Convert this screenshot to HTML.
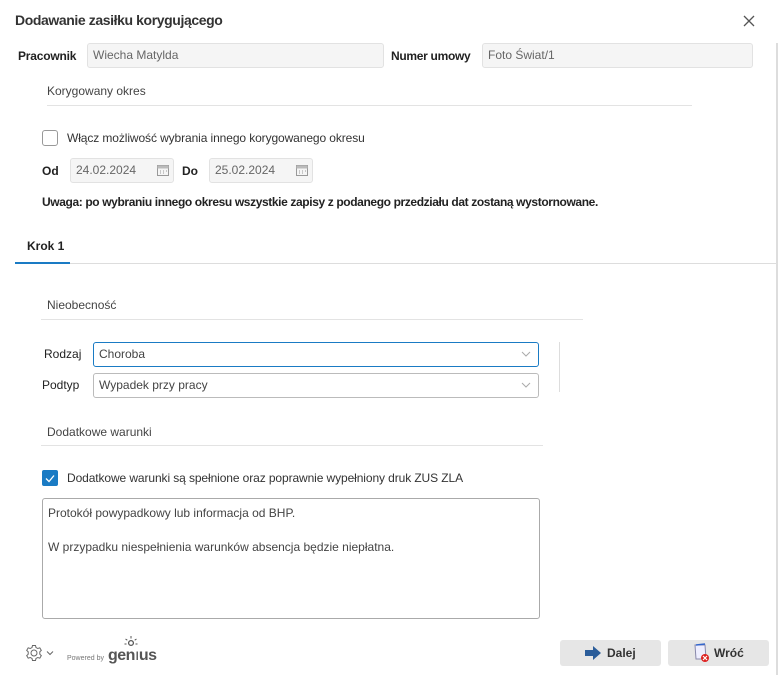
<!DOCTYPE html>
<html><head><meta charset="utf-8"><style>
*{box-sizing:border-box;margin:0;padding:0}
body{width:778px;height:675px;background:#fff;font-family:"Liberation Sans",sans-serif;font-size:12px;color:#333;position:relative;overflow:hidden}
.a{position:absolute;white-space:nowrap}
.lbl{font-weight:bold;color:#222}
.inp{position:absolute;background:#f5f5f5;border:1px solid #e2e2e2;border-radius:3px;color:#666;padding-left:5px;line-height:23px}
.sec{position:absolute;color:#444}
.ln{position:absolute;height:1px;background:#e3e3e3}
.sel{position:absolute;background:#fff;border:1px solid #bbb;border-radius:3px;padding-left:5px;line-height:23px;color:#444}
.btn{position:absolute;background:#e6e6e6;border-radius:3px;height:26px;top:640px;width:101px;font-weight:bold;color:#333;line-height:26px}
</style></head><body>
<div class="a" style="left:15px;top:12px;font-size:14px;font-weight:bold;color:#333;letter-spacing:-0.4px">Dodawanie zasiłku korygującego</div>
<svg class="a" style="left:743px;top:15px" width="12" height="12"><path d="M1 1L11 11M11 1L1 11" stroke="#555" stroke-width="1.3"/></svg>
<div class="a" style="left:776px;top:43px;width:2px;height:632px;background:#ddd"></div>

<div class="a lbl" style="left:18px;top:49px;letter-spacing:-0.2px">Pracownik</div>
<div class="inp" style="left:87px;top:43px;width:297px;height:25px">Wiecha Matylda</div>
<div class="a lbl" style="left:391px;top:49px;letter-spacing:-0.3px">Numer umowy</div>
<div class="inp" style="left:482px;top:43px;width:271px;height:25px">Foto Świat/1</div>

<div class="sec" style="left:47px;top:84px">Korygowany okres</div>
<div class="ln" style="left:47px;top:105px;width:645px"></div>

<div class="a" style="left:42px;top:130px;width:16px;height:16px;border:1px solid #999;border-radius:3px"></div>
<div class="a" style="left:67px;top:131px;letter-spacing:-0.1px">Włącz możliwość wybrania innego korygowanego okresu</div>

<div class="a lbl" style="left:42px;top:164px">Od</div>
<div class="inp" style="left:70px;top:158px;width:104px;height:25px">24.02.2024</div>
<svg class="a" style="left:157px;top:164px" width="12" height="12"><rect x="0.5" y="1.5" width="11" height="10" fill="none" stroke="#999"/><rect x="0.5" y="1.5" width="11" height="3" fill="#bbb"/><path d="M3 7h1M6 7h1M9 7h1M3 9h1M6 9h1" stroke="#999"/></svg>
<div class="a lbl" style="left:182px;top:164px">Do</div>
<div class="inp" style="left:209px;top:158px;width:104px;height:25px">25.02.2024</div>
<svg class="a" style="left:296px;top:164px" width="12" height="12"><rect x="0.5" y="1.5" width="11" height="10" fill="none" stroke="#999"/><rect x="0.5" y="1.5" width="11" height="3" fill="#bbb"/><path d="M3 7h1M6 7h1M9 7h1M3 9h1M6 9h1" stroke="#999"/></svg>

<div class="a lbl" style="left:42px;top:195px;letter-spacing:-0.38px">Uwaga: po wybraniu innego okresu wszystkie zapisy z podanego przedziału dat zostaną wystornowane.</div>

<div class="a lbl" style="left:27px;top:239px">Krok 1</div>
<div class="ln" style="left:15px;top:263px;width:763px;background:#ddd"></div>
<div class="a" style="left:15px;top:262px;width:55px;height:2px;background:#1a7bc4"></div>

<div class="sec" style="left:47px;top:298px">Nieobecność</div>
<div class="ln" style="left:41px;top:319px;width:542px"></div>

<div class="a" style="left:44px;top:347px;color:#222">Rodzaj</div>
<div class="sel" style="left:93px;top:342px;width:446px;height:25px;border-color:#1a7bc4">Choroba</div>
<svg class="a" style="left:521px;top:351px" width="10" height="6"><path d="M1 1l4 4 4-4" fill="none" stroke="#aaa"/></svg>
<div class="a" style="left:42px;top:378px;color:#222">Podtyp</div>
<div class="sel" style="left:93px;top:373px;width:446px;height:25px">Wypadek przy pracy</div>
<svg class="a" style="left:521px;top:382px" width="10" height="6"><path d="M1 1l4 4 4-4" fill="none" stroke="#aaa"/></svg>
<div class="a" style="left:559px;top:342px;width:1px;height:50px;background:#ddd"></div>

<div class="sec" style="left:47px;top:425px">Dodatkowe warunki</div>
<div class="ln" style="left:41px;top:445px;width:502px"></div>

<div class="a" style="left:42px;top:470px;width:16px;height:16px;background:#1a7bc4;border-radius:2px"></div>
<svg class="a" style="left:42px;top:470px" width="16" height="16"><path d="M4 8.5l3 3 5-6" fill="none" stroke="#fff" stroke-width="1.3"/></svg>
<div class="a" style="left:67px;top:471px;letter-spacing:-0.1px">Dodatkowe warunki są spełnione oraz poprawnie wypełniony druk ZUS ZLA</div>

<div class="a" style="left:42px;top:498px;width:498px;height:121px;border:1px solid #aaa;border-radius:3px;padding:6px 5px;color:#444;line-height:17px;white-space:normal">Protokół powypadkowy lub informacja od BHP.<br><br>W przypadku niespełnienia warunków absencja będzie niepłatna.</div>

<svg class="a" style="left:25px;top:644px" width="32" height="18"><g fill="none" stroke="#666" stroke-width="1"><circle cx="9" cy="9" r="3"/><path d="M7.5 1.5h3l.5 2 1.8 1 2-.7 1.5 2.6-1.5 1.4v2.4l1.5 1.4-1.5 2.6-2-.7-1.8 1-.5 2h-3l-.5-2-1.8-1-2 .7-1.5-2.6 1.5-1.4v-2.4l-1.5-1.4 1.5-2.6 2 .7 1.8-1z"/><path d="M22 7.5l3 3 3-3"/></g></svg>
<div class="a" style="left:67px;top:655px;font-size:7px;color:#777">Powered by</div>
<div class="a" style="left:108px;top:647px;font-size:16px;font-weight:bold;color:#555;letter-spacing:-0.5px">gen<span style="font-weight:normal">ı</span>us</div>
<svg class="a" style="left:124px;top:636px" width="14" height="12"><circle cx="7" cy="7" r="2.4" fill="none" stroke="#555" stroke-width="1.3"/><path d="M7 0v2.5M1.5 3l1.8 1.2M12.5 3l-1.8 1.2M0.5 8h2M11.5 8h2" stroke="#555"/></svg>

<div class="btn" style="left:560px"><svg style="position:absolute;left:24px;top:5px" width="18" height="16"><path d="M1 5h8V1l8 7-8 7v-4H1z" fill="#2b5d9a"/></svg><span style="position:absolute;left:47px">Dalej</span></div>
<div class="btn" style="left:668px"><svg style="position:absolute;left:24px;top:3px" width="20" height="20"><path d="M3 2h10l1 14H4z" fill="#eef" stroke="#88a"/><path d="M4 2l9-1" stroke="#36c" stroke-width="1.5"/><circle cx="13" cy="15" r="4" fill="#d22"/><path d="M11 13l4 4M15 13l-4 4" stroke="#fff" stroke-width="1.2"/></svg><span style="position:absolute;left:46px">Wróć</span></div>
</body></html>
